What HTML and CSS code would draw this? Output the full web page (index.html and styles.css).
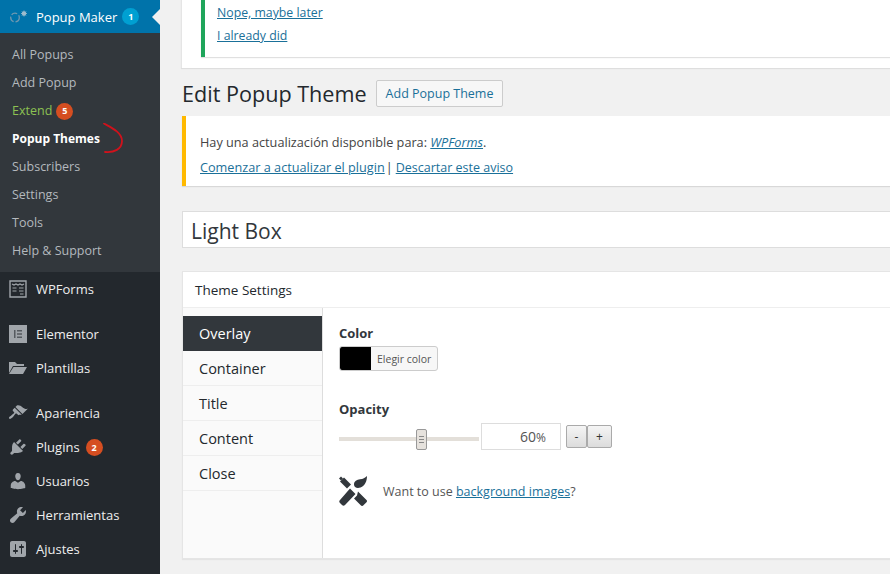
FILE: index.html
```html
<!DOCTYPE html>
<html lang="es">
<head>
<meta charset="utf-8">
<title>Edit Popup Theme</title>
<link rel="stylesheet" href="styles.css">
</head>
<body>
<div class="app">
  <nav class="side">
    <div class="head">
      <svg class="head-ico" width="26" height="18" viewBox="0 0 26 18"><circle cx="5" cy="9.500" r="4.300" fill="none" stroke="#6f98b0" stroke-width="1.300" stroke-dasharray="6 2"/><circle cx="14" cy="5.500" r="2.200" fill="#9dbccd"/><path d="M14 2.500v6M11 5.500h6M12 3.500l4 4M16 3.500l-4 4" stroke="#9dbccd" stroke-width=".8"/></svg>
      <span class="head-label">Popup Maker</span>
      <span class="badge badge-blue">1</span>
      <span class="head-arrow"></span>
    </div>
    <ul class="sub">
      <li>All Popups</li>
      <li>Add Popup</li>
      <li class="green">Extend <span class="badge badge-red">5</span></li>
      <li class="current">Popup Themes
        <svg class="scribble" width="22" height="32" viewBox="0 0 22 32"><path d="M2 0.500C8 4 20 9 20 18C20 26 12 30 3 29" fill="none" stroke="#d0121c" stroke-width="1.800" stroke-linecap="round"/></svg>
      </li>
      <li>Subscribers</li>
      <li>Settings</li>
      <li>Tools</li>
      <li>Help &amp; Support</li>
    </ul>
    <ul class="menu">
      <li class="m-first"><svg class="ico" viewBox="-1 -1 20 20"><path d="M1 1h16v16H1z" fill="none" stroke="#a0a5aa" stroke-width="1.400"/><path d="M3 4l2 1 2-1 2 1 2-1 2 1 2-1M3.500 8h4M10 8h4.500M3.500 11h4M10 11h4.500M11 14h3.500" stroke="#a0a5aa" stroke-width="1.200" fill="none"/></svg>WPForms</li>
      <li class="m-gap"><svg class="ico" viewBox="-1 -1 20 20"><path d="M0 0h18v18H0z" fill="#a0a5aa"/><path d="M5 5h1.500v8H5zM8 5h5v1.500H8zM8 8.200h5v1.500H8zM8 11.500h5V13H8z" fill="#555a5f"/></svg>Elementor</li>
      <li><svg class="ico" viewBox="-1 -1 20 20"><path d="M0 3h6l2 2h7v2H4L0 14zM4.500 8H18l-4 7H0z" fill="#a0a5aa"/></svg>Plantillas</li>
      <li class="m-gap"><svg class="ico" viewBox="0 0 20 20"><path fill="#a0a5aa" d="M14.480 11.060L7.410 3.990l1.500-1.500c.5-.56 2.300-.47 3.510.32 1.210.8 1.430 1.280 2.910 2.100 1.180.64 2.450 1.260 4.450.85zm-.71.71L6.700 4.700 4.930 6.470c-.39.39-.39 1.020 0 1.410l1.060 1.060c.39.39.39 1.030 0 1.420-.6.6-1.430 1.110-2.210 1.690-.35.26-.7.53-1.010.84C1.430 13.230.4 14.810 1.200 15.600c.79.79 2.380-.23 3.720-1.570.31-.31.58-.66.84-1.010.58-.78 1.090-1.610 1.690-2.210.39-.39 1.020-.39 1.410 0l1.060 1.060c.39.39 1.020.39 1.410 0z"/></svg>Apariencia</li>
      <li><svg class="ico" viewBox="0 0 20 20"><path fill="#a0a5aa" d="M13.110 4.360L9.870 7.600 8 5.730l3.240-3.240c.35-.34 1.050-.2 1.560.32.52.51.66 1.210.31 1.550zm-8 1.770l.91-1.120 9.010 9.010-1.190.84c-.71.71-2.630 1.160-3.820 1.160H6.140L4.900 17.260c-.59.59-1.540.59-2.120 0-.59-.58-.59-1.530 0-2.120l1.240-1.240v-3.880c0-1.130.4-3.190 1.090-3.890zm7.260 3.970l3.240-3.240c.34-.35 1.040-.21 1.550.31.520.51.66 1.210.31 1.550l-3.240 3.250z"/></svg>Plugins <span class="badge badge-red">2</span></li>
      <li><svg class="ico" viewBox="0 0 20 20"><path fill="#a0a5aa" d="M10 9.250c-2.270 0-2.730-3.440-2.730-3.440C7 4.020 7.820 2 9.970 2c2.160 0 2.980 2.020 2.710 3.810 0 0-.41 3.440-2.680 3.440zm0 2.570L12.720 10c2.390 0 4.520 2.330 4.520 4.530v2.490s-3.650 1.130-7.240 1.130c-3.650 0-7.240-1.130-7.240-1.130v-2.490c0-2.250 1.940-4.480 4.470-4.480z"/></svg>Usuarios</li>
      <li><svg class="ico" viewBox="0 0 20 20"><path fill="#a0a5aa" d="M16.680 9.770c-1.340 1.340-3.300 1.670-4.950.99l-5.410 6.520c-.99.99-2.590.99-3.580 0s-.99-2.590 0-3.570l6.520-5.420c-.68-1.650-.35-3.610.99-4.950 1.280-1.280 3.120-1.620 4.720-1.060l-2.890 2.890 2.820 2.820 2.860-2.870c.53 1.580.18 3.390-1.080 4.650z"/></svg>Herramientas</li>
      <li><svg class="ico" viewBox="0 0 20 20"><path fill="#a0a5aa" d="M18 16V4c0-1.100-.9-2-2-2H4c-1.100 0-2 .9-2 2v12c0 1.100.9 2 2 2h12c1.100 0 2-.9 2-2zM8 11h1c.55 0 1 .45 1 1s-.45 1-1 1H8v1.500c0 .28-.22.5-.5.5s-.5-.22-.5-.5V13H6c-.55 0-1-.45-1-1s.45-1 1-1h1V5.500c0-.28.22-.5.5-.5s.5.22.5.5V11zm5-2h-1c-.55 0-1-.45-1-1s.45-1 1-1h1V5.500c0-.28.22-.5.5-.5s.5.22.5.5V7h1c.55 0 1 .45 1 1s-.45 1-1 1h-1v5.500c0 .28-.22.5-.5.5s-.5-.22-.5-.5V9z"/></svg>Ajustes</li>
    </ul>
  </nav>
  <main class="main">
    <section class="top-card">
      <div class="green-note">
        <a href="#">Nope, maybe later</a>
        <a href="#">I already did</a>
      </div>
    </section>
    <header class="title-row">
      <h1>Edit Popup Theme</h1>
      <a class="add-btn" href="#">Add Popup Theme</a>
    </header>
    <div class="notice">
      <p>Hay una actualización disponible para: <a href="#"><em>WPForms</em></a>.</p>
      <p class="notice-links"><a href="#">Comenzar a actualizar el plugin</a><span class="sep">|</span><a class="dismiss" href="#">Descartar este aviso</a></p>
    </div>
    <div class="name-box">Light Box</div>
    <section class="panel">
      <h2>Theme Settings</h2>
      <div class="panel-body">
        <ul class="tabs">
          <li class="active">Overlay</li>
          <li>Container</li>
          <li>Title</li>
          <li>Content</li>
          <li>Close</li>
        </ul>
        <div class="fields">
          <div class="label">Color</div>
          <div class="color-btn"><span class="swatch"></span><span class="pick">Elegir color</span></div>
          <div class="label label-op">Opacity</div>
          <div class="range-row">
            <div class="track"><span class="thumb"><i></i><i></i><i></i></span></div>
            <div class="val">60<small>%</small></div>
            <div class="steps"><span class="step">-</span><span class="step">+</span></div>
          </div>
          <div class="promo">
            <svg class="tools" width="28" height="30" viewBox="0 0 28 30"><path d="M0 2.500L2 .5 4 2.500 2 4.500z" fill="#32373c"/><path d="M5 1.500L12 8.500 8 12.500 1 5.500z" fill="#32373c"/><path d="M11 12.500L16.500 18 6 29c-1 1-2 1-3 0L1 27c-1-1-1-2 0-3z" fill="#32373c"/><path d="M19 15.500L27.500 24c.7.700.7 1.500 0 2.200L24.200 29.500c-.7.700-1.500.7-2.200 0L15 22.500 18 19.500z" fill="#32373c"/><path d="M15 8.500C15 5 18 3.500 21 3.200 24 3 26 2 28 0 28 5 26 10 21.500 11.500 18 12.500 15 11.500 15 8.500z" fill="#32373c"/></svg>
            <span>Want to use <a href="#">background images</a>?</span>
          </div>
        </div>
      </div>
    </section>
  </main>
</div>
</body>
</html>
```

FILE: styles.css
```css
* { box-sizing: border-box; }
html, body { margin: 0; padding: 0; height: 100%; overflow: hidden; }
body { background: #f1f1f1; color: #444; font-family: "Open Sans", "Noto Sans", sans-serif; font-size: 13px; }
ul { list-style: none; margin: 0; padding: 0; }
a { color: #1a7099; }
p { margin: 0; }
.app { display: flex; width: 890px; height: 574px; overflow: hidden; }

.side { width: 160px; flex: none; background: #23282d; color: #eee; }
.head { height: 33px; background: #0073aa; display: flex; align-items: center; position: relative; padding-left: 10px; color: #fff; }
.head-ico { flex: none; }
.head-label { font-size: 13px; }
.badge { display: inline-flex; align-items: center; justify-content: center; width: 17px; height: 17px; border-radius: 50%; font-size: 9px; font-weight: 700; color: #fff; }
.badge-blue { background: #00a0d2; margin-left: 5px; }
.badge-red { background: #d54e21; margin-left: 6px; }
.head-arrow { position: absolute; right: 0; top: 9px; border: 8px solid transparent; border-right-color: #f1f1f1; border-left: 0; }

.sub { background: #32373c; height: 239px; padding-top: 8px; }
.sub li { height: 28px; line-height: 28px; padding-left: 12px; color: #b4b9be; position: relative; font-size: 12.500px; }
.sub .green { color: #8cc152; display: flex; align-items: center; }
.sub .green .badge { margin-left: 4px; }
.sub .current { color: #fff; font-weight: 700; font-size: 12px; }
.scribble { position: absolute; left: 102px; top: -2px; }

.menu li { height: 34px; display: flex; align-items: center; color: #eee; padding-left: 8px; font-size: 13px; }
.menu .m-gap { margin-top: 11px; }
.ico { width: 20px; height: 20px; margin-right: 8px; flex: none; }

.main { flex: 1; min-width: 0; padding-left: 21px; margin-right: -6px; }
.top-card { background: #fff; height: 69px; margin-top: -1px; padding: 0 0 10px 19px; box-shadow: 0 1px 1px rgba(0,0,0,.08); border-left: 1px solid #e5e5e5; }
.green-note { height: 58px; border-left: 4px solid #1fa55b; padding: 5px 0 0 12px; box-shadow: 0 1px 1px rgba(0,0,0,.12); display: flex; flex-direction: column; align-items: flex-start; gap: 5px; line-height: 18px; font-size: 12.300px; }

.title-row { display: flex; align-items: center; height: 48px; padding: 3px 0 0 1px; }
h1 { font-size: 21.600px; font-weight: 400; color: #23282d; margin: 0 9px 0 0; }
.add-btn { height: 27px; line-height: 25px; padding: 0 9px; border: 1px solid #ccc; border-radius: 2px; background: #f7f7f7; font-size: 12.500px; font-weight: 500; text-decoration: none; }

.notice { height: 70px; margin-left: 1px; background: #fff; border-left: 4px solid #ffb900; box-shadow: 0 1px 1px rgba(0,0,0,.1); padding: 17px 0 0 14px; line-height: 18px; font-size: 12.700px; }
.notice p + p { margin-top: 7px; }
.notice-links { display: flex; align-items: baseline; }
.sep { margin: 0 3px 0 1px; }
.dismiss { font-size: 12.500px; }

.name-box { height: 37px; margin: 25px 0 0 1px; background: #fff; border: 1px solid #ddd; padding-left: 8px; font-size: 21px; line-height: 39px; color: #32373c; }

.panel { height: 288px; margin: 23px 0 0 1px; background: #fff; border: 1px solid #e5e5e5; box-shadow: 0 1px 1px rgba(0,0,0,.05); }
h2 { height: 36px; margin: 0; padding-left: 12px; font-size: 13.500px; font-weight: 500; line-height: 37px; color: #23282d; border-bottom: 1px solid #eee; }
.panel-body { display: flex; height: 250px; }
.tabs { width: 140px; flex: none; padding-top: 8px; border-right: 1px solid #ddd; background: #fafafa; }
.tabs li { height: 35px; line-height: 35px; padding-left: 16px; font-size: 14.500px; color: #23282d; border-bottom: 1px solid #eee; }
.tabs .active { background: #32373c; color: #fff; border-bottom: 0; }

.fields { padding: 16px 0 0 16px; flex: 1; }
.label { font-size: 13px; font-weight: 700; color: #32373c; line-height: 18px; }
.label-op { margin-top: 29px; }
.color-btn { display: flex; width: 99px; height: 25px; margin-top: 4px; border: 1px solid #ccc; border-radius: 3px; background: #f7f7f7; overflow: hidden; }
.swatch { width: 31px; margin: -1px 0; background: #000; flex: none; border-radius: 3px 0 0 3px; }
.pick { font-size: 10.500px; line-height: 25px; padding-left: 6px; color: #555; }
.range-row { display: flex; align-items: center; margin-top: 5px; }
.track { width: 140px; height: 4px; margin-top: 4px; background: #e3dfd9; position: relative; }
.thumb { position: absolute; left: 77px; top: -8px; width: 11px; height: 21px; background: #e6e2dd; border: 1px solid #999; border-radius: 2px; display: flex; flex-direction: column; align-items: center; justify-content: center; gap: 2px; }
.thumb i { display: block; width: 5px; height: 1px; background: #888; }
.val { width: 80px; height: 27px; margin-left: 2px; background: #fff; border: 1px solid #ddd; text-align: right; padding-right: 14px; line-height: 26px; font-size: 14px; color: #555; }
.val small { font-size: 12px; }
.steps { display: flex; margin-left: 5px; }
.step { width: 21px; height: 23px; border: 1px solid #aaa; border-radius: 2px; background: linear-gradient(#f5f5f5, #dcdcdc); text-align: center; line-height: 21px; color: #333; font-size: 12px; }
.step + .step { width: 25px; }
.promo { display: flex; align-items: center; margin-top: 26px; font-size: 12.500px; color: #555; }
.tools { margin-right: 16px; flex: none; }
```
